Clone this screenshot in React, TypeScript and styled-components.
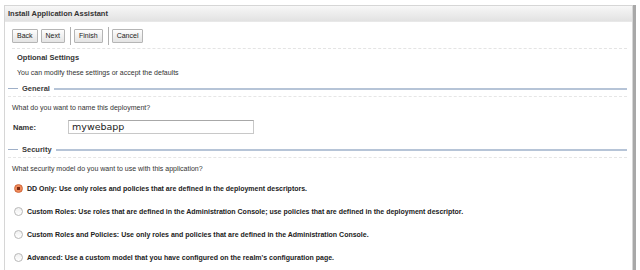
import { createGlobalStyle, styled } from "styled-components";

const Global = createGlobalStyle`
  body {
    margin: 0;
    background: #fff;
    font-family: "Liberation Sans", Arial, sans-serif;
    color: #333;
    overflow: hidden;
  }
`;

const Panel = styled.div`
  margin: 5px 0 0 4px;
  width: 629px;
  height: 265px;
  border: 1px solid #d6d6d6;
  border-bottom: none;
  box-shadow: 3px 0 0 #a8a8a8;
  box-sizing: border-box;
  overflow: hidden;
`;

const Header = styled.div`
  height: 15px;
  line-height: 15px;
  padding-left: 3px;
  font-size: 7.5px;
  font-weight: bold;
  color: #333;
  background: linear-gradient(#f7f7f7, #e2e2e2);
  border-bottom: 1px solid #e8e8e8;
`;

const Toolbar = styled.div`
  display: flex;
  align-items: center;
  gap: 3px;
  padding: 6px 0 0 7px;
  height: 15px;
`;

const Button = styled.button`
  font-family: inherit;
  font-size: 7px;
  color: #222;
  height: 14px;
  padding: 0 4px;
  border: 1px solid #b5b5b5;
  border-radius: 1px;
  background: linear-gradient(#fdfdfd, #e4e4e4);
`;

const Sep = styled.div`
  width: 1px;
  height: 18px;
  background: #b0b0b0;
  margin-left: 2px;
`;

const Dashed = styled.div`
  margin: 5px 5px 0 7px;
  border-top: 1px dashed #e4e4e4;
`;

const Title = styled.div`
  font-size: 7.5px;
  font-weight: bold;
  padding: 4px 0 0 12px;
  height: 10px;
`;

const Intro = styled.div`
  font-size: 7px;
  padding: 6px 0 0 12px;
  height: 10px;
`;

const Legend = styled.div<{ $top: number }>`
  display: flex;
  align-items: center;
  margin: ${(p) => p.$top}px 5px 0 3px;
  font-size: 7.5px;
  font-weight: bold;
  color: #3a3a3a;
  height: 9px;
  &::before {
    content: "";
    width: 10px;
    height: 1px;
    background: #9fb0c8;
    margin-right: 4px;
  }
  &::after {
    content: "";
    flex: 1;
    height: 2px;
    background: #b6c4d7;
    margin-left: 4px;
  }
`;

const Dotted = styled.div`
  margin: 3px 5px 0 3px;
  border-top: 1px dashed #e6e6e6;
`;

const Question = styled.div`
  font-size: 7px;
  padding: 7px 0 0 7px;
  height: 10px;
`;

const FieldRow = styled.div`
  display: flex;
  align-items: center;
  padding: 6px 0 0 8px;
  height: 14px;
`;

const Label = styled.div`
  width: 55px;
  font-size: 7.5px;
  font-weight: bold;
`;

const Input = styled.div`
  width: 186px;
  height: 14px;
  box-sizing: border-box;
  border: 1px solid #c8c8c8;
  border-top-color: #a8a8a8;
  padding-left: 3px;
  font-family: "DejaVu Sans", sans-serif;
  font-size: 9.5px;
  line-height: 12px;
  color: #222;
`;

const Options = styled.div`
  display: flex;
  flex-direction: column;
  gap: 12px;
  padding: 8px 0 0 9px;
`;

const Option = styled.label`
  display: flex;
  align-items: center;
  gap: 4px;
  font-size: 7px;
  font-weight: bold;
  color: #222;
  height: 11px;
`;

const Radio = styled.span<{ $on?: boolean }>`
  width: 9px;
  height: 9px;
  border-radius: 50%;
  box-sizing: border-box;
  border: 1px solid ${(p) => (p.$on ? "#d0663a" : "#b8b8b8")};
  background: ${(p) =>
    p.$on
      ? "radial-gradient(circle, #7a2a10 0 1.4px, #ef8a5a 1.8px)"
      : "linear-gradient(#f0f0f0, #ffffff)"};
`;

const options = [
  "DD Only: Use only roles and policies that are defined in the deployment descriptors.",
  "Custom Roles: Use roles that are defined in the Administration Console; use policies that are defined in the deployment descriptor.",
  "Custom Roles and Policies: Use only roles and policies that are defined in the Administration Console.",
  "Advanced: Use a custom model that you have configured on the realm's configuration page.",
];

export default function App() {
  return (
    <>
      <Global />
      <Panel>
        <Header>Install Application Assistant</Header>
        <Toolbar>
          <Button>Back</Button>
          <Button>Next</Button>
          <Sep />
          <Button>Finish</Button>
          <Sep />
          <Button>Cancel</Button>
        </Toolbar>
        <Dashed />
        <Title>Optional Settings</Title>
        <Intro>You can modify these settings or accept the defaults</Intro>
        <Legend $top={5}>General</Legend>
        <Dotted />
        <Question>What do you want to name this deployment?</Question>
        <FieldRow>
          <Label>Name:</Label>
          <Input>mywebapp</Input>
        </FieldRow>
        <Legend $top={11}>Security</Legend>
        <Dotted />
        <Question>What security model do you want to use with this application?</Question>
        <Options>
          {options.map((o, i) => (
            <Option key={i}>
              <Radio $on={i === 0} />
              {o}
            </Option>
          ))}
        </Options>
      </Panel>
    </>
  );
}
